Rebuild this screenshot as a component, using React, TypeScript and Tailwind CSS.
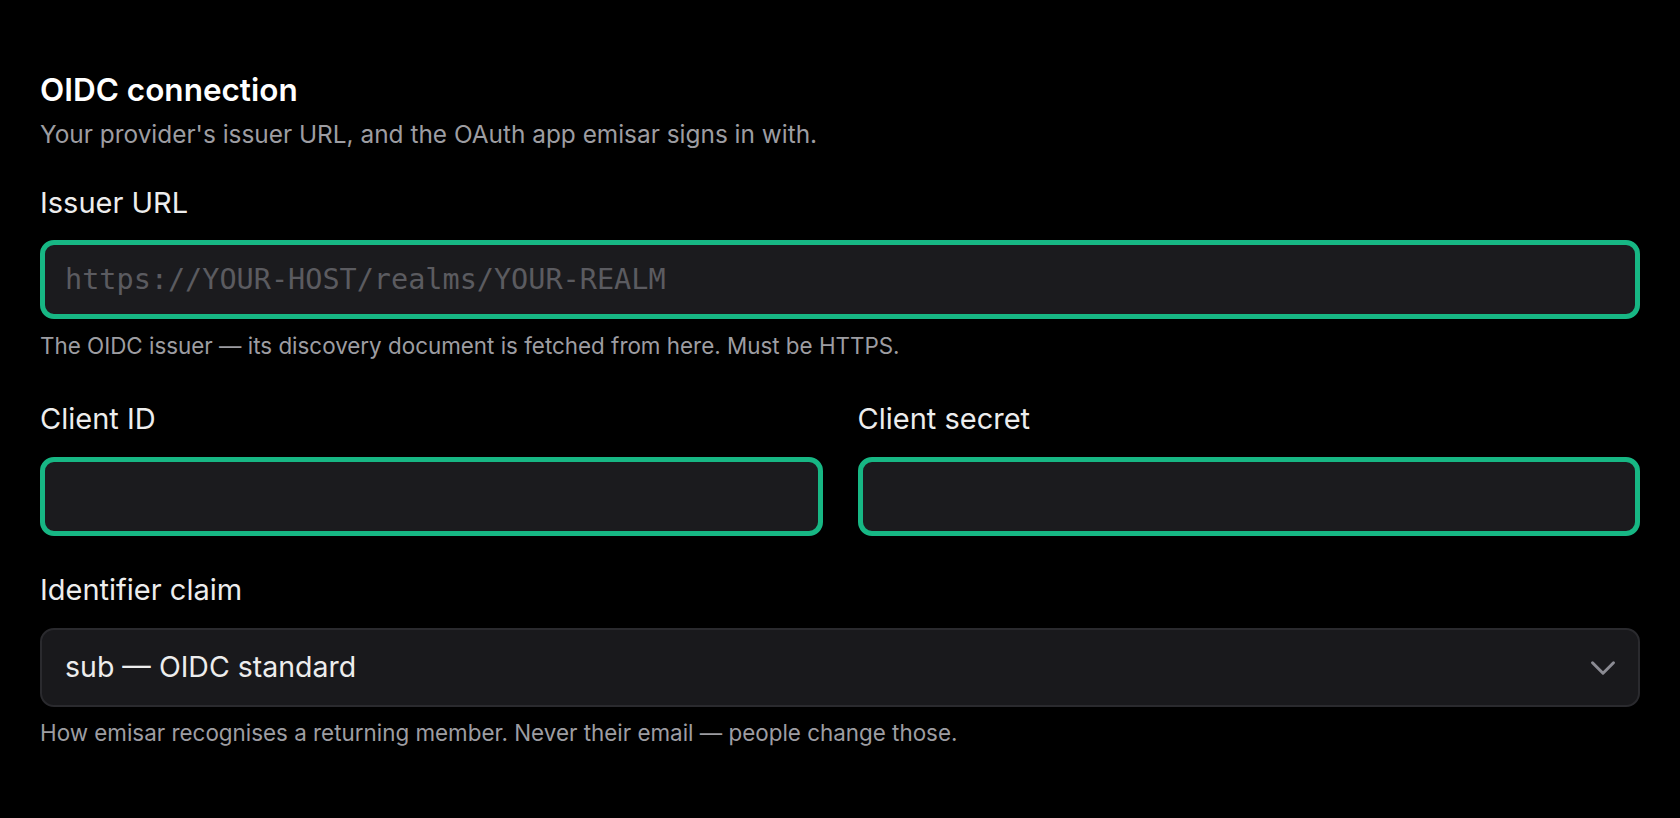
import { ChevronDown } from 'lucide-react';

const sans = "font-['Inter','Noto_Sans',sans-serif]";

const Label = ({ children }: { children: React.ReactNode }) => (
  <label className="block text-[29px] leading-[36px] font-normal text-[#ededed]">{children}</label>
);

const Help = ({ children, className = '' }: { children: React.ReactNode; className?: string }) => (
  <p className={`text-[22.4px] leading-[30px] text-[#9d9da2] ${className}`}>{children}</p>
);

const TextInput = ({ placeholder, className = '' }: { placeholder?: string; className?: string }) => (
  <input
    placeholder={placeholder}
    className={`block w-full h-[79px] rounded-[14px] border-[5px] border-[#17b784] bg-[#1b1b1e] pl-5 pr-5 font-['DejaVu_Sans_Mono',monospace] text-[28.5px] text-[#ededed] placeholder:text-[#5b5b60] outline-none ${className}`}
  />
);

export default function App() {
  return (
    <div className={`min-h-screen bg-black ${sans} px-10 pt-[71px]`}>
      <h2 className="text-[31.5px] leading-[38px] font-semibold text-white">OIDC connection</h2>
      <p className="mt-[9px] text-[24.4px] leading-[32px] text-[#9d9da2]">
        Your provider's issuer URL, and the OAuth app emisar signs in with.
      </p>

      <div className="mt-[35px]">
        <Label>Issuer URL</Label>
        <TextInput className="mt-[19px]" placeholder="https://YOUR-HOST/realms/YOUR-REALM" />
        <Help className="mt-[12px]">
          The OIDC issuer — its discovery document is fetched from here. Must be HTTPS.
        </Help>
      </div>

      <div className="mt-[40px] grid grid-cols-2 gap-[35px]">
        <div>
          <Label>Client ID</Label>
          <TextInput className="mt-[20px]" />
        </div>
        <div>
          <Label>Client secret</Label>
          <TextInput className="mt-[20px]" />
        </div>
      </div>

      <div className="mt-[36px]">
        <Label>Identifier claim</Label>
        <div className="mt-[20px] flex h-[79px] items-center justify-between rounded-[14px] border-2 border-[#2a2a2e] bg-[#19191c] pl-[23px] pr-[14px]">
          <span className="text-[28.5px] text-[#ededed]">sub — OIDC standard</span>
          <ChevronDown className="h-[42px] w-[42px] text-[#8b8b93]" strokeWidth={1.7} />
        </div>
        <Help className="mt-[11px]">
          How emisar recognises a returning member. Never their email — people change those.
        </Help>
      </div>
    </div>
  );
}
